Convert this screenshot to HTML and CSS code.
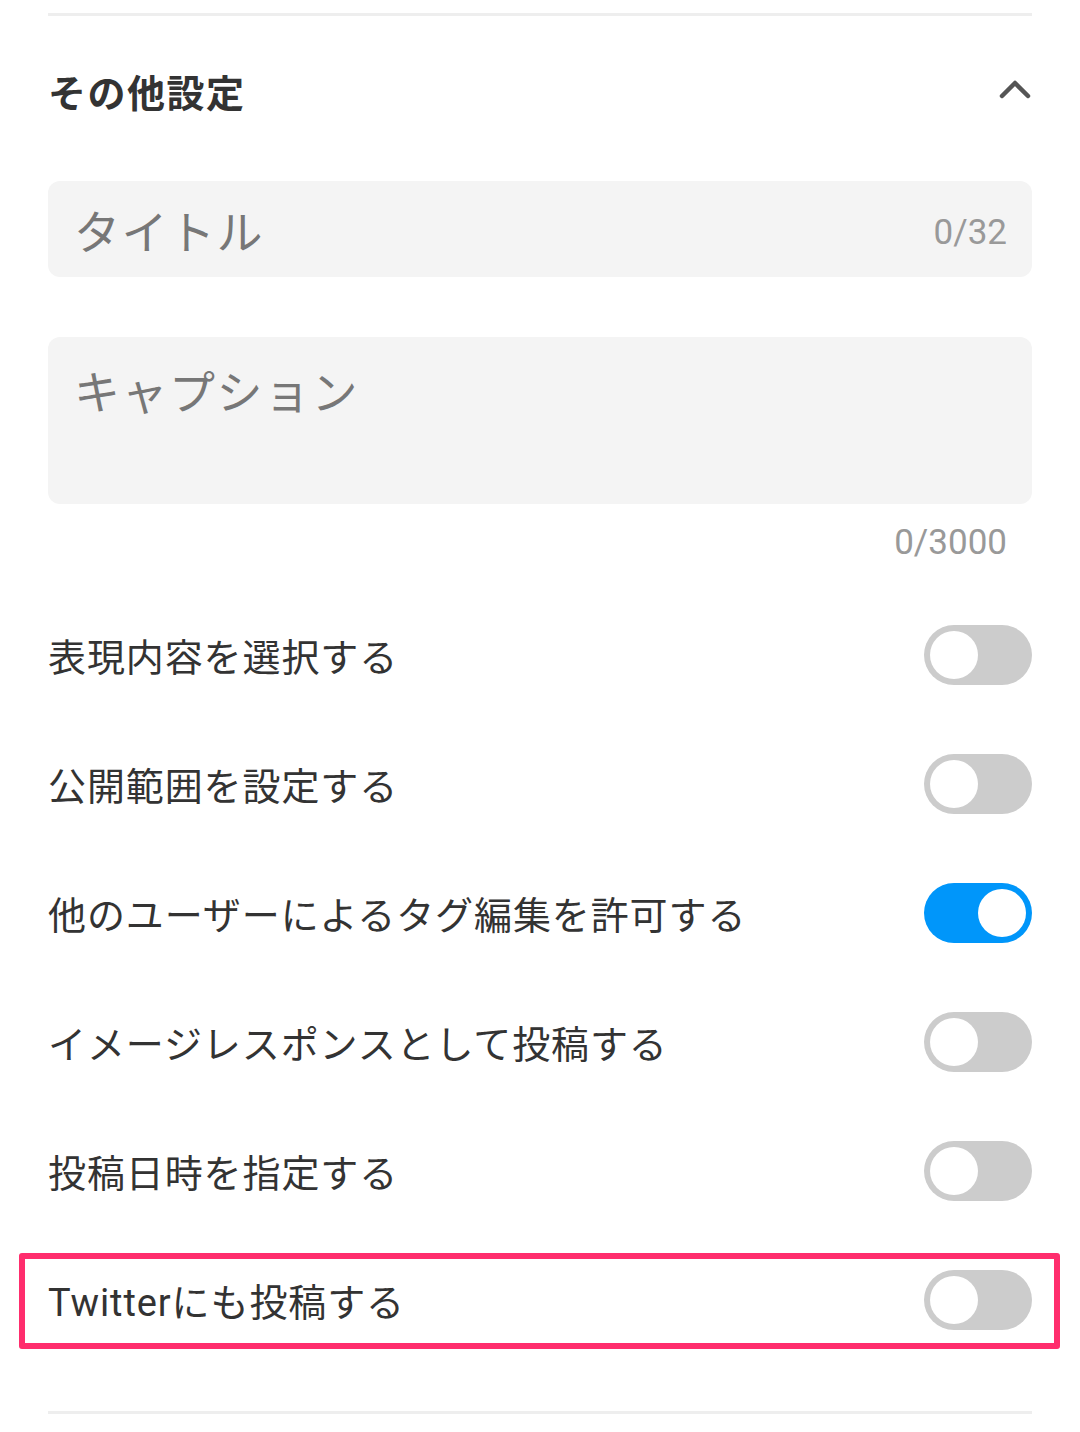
FILE: index.html
```html
<!DOCTYPE html>
<html lang="ja">
<head>
    <meta charset="UTF-8">
    <meta name="viewport" content="width=device-width, initial-scale=1.0">
    <title>その他設定</title>
    <link rel="stylesheet" href="styles.css">
</head>
<body>
    <div class="panel">
        <hr class="divider top">

        <div class="section-header">
            <h2>その他設定</h2>
            <svg class="chevron" width="32" height="22" viewBox="0 0 32 22">
                <path d="M3 18 L16 5 L29 18" fill="none" stroke="#555" stroke-width="4.5" stroke-linecap="round" stroke-linejoin="round"/>
            </svg>
        </div>

        <div class="field title-field">
            <span class="placeholder">タイトル</span>
            <span class="counter">0/32</span>
        </div>

        <div class="field caption-field">
            <span class="placeholder">キャプション</span>
        </div>
        <div class="caption-counter">0/3000</div>

        <ul class="options">
            <li class="option">
                <span>表現内容を選択する</span>
                <span class="toggle"></span>
            </li>
            <li class="option">
                <span>公開範囲を設定する</span>
                <span class="toggle"></span>
            </li>
            <li class="option">
                <span>他のユーザーによるタグ編集を許可する</span>
                <span class="toggle on"></span>
            </li>
            <li class="option">
                <span>イメージレスポンスとして投稿する</span>
                <span class="toggle"></span>
            </li>
            <li class="option">
                <span>投稿日時を指定する</span>
                <span class="toggle"></span>
            </li>
            <li class="option highlighted">
                <span>Twitterにも投稿する</span>
                <span class="toggle"></span>
            </li>
        </ul>

        <hr class="divider bottom">
    </div>
</body>
</html>
```

FILE: styles.css
```css
body {
    margin: 0;
    background-color: white;
    font-family: "Noto Sans CJK JP", "Noto Sans", sans-serif;
    color: #333;
}

.panel {
    padding: 0 48px;
}

.divider {
    border: none;
    height: 3px;
    background-color: #eeeeee;
    margin: 0;
}

.divider.top {
    margin-top: 13px;
}

.divider.bottom {
    margin-top: 47px;
}

.section-header {
    display: flex;
    align-items: center;
    justify-content: space-between;
    height: 154px;
}

.section-header h2 {
    margin: 0 0 6px 0;
    font-size: 38px;
    font-weight: bold;
    color: #333;
    letter-spacing: 1.5px;
}

.chevron {
    margin-right: 1px;
    margin-top: -8px;
}

.field {
    background-color: #f4f4f4;
    border-radius: 12px;
    box-sizing: border-box;
    padding: 0 25px 0 26px;
}

.title-field {
    margin-top: 11px;
    height: 96px;
    display: flex;
    align-items: center;
    justify-content: space-between;
}

.placeholder {
    font-size: 46px;
    color: #777;
    letter-spacing: 1.5px;
}

.counter,
.caption-counter {
    font-family: Roboto, "Noto Sans", sans-serif;
    font-size: 35px;
    color: #999;
}

.counter {
    margin-top: 6px;
}

.caption-field {
    margin-top: 60px;
    height: 167px;
    padding-top: 20px;
    line-height: 64px;
}

.caption-counter {
    text-align: right;
    padding-right: 25px;
    margin-top: 15px;
    line-height: 48px;
    margin-bottom: 23px;
}

.options {
    list-style: none;
    margin: 0;
    padding: 0;
}

.option {
    position: relative;
    display: flex;
    align-items: center;
    justify-content: space-between;
    height: 129px;
    font-family: Roboto, "Noto Sans CJK JP", sans-serif;
    font-size: 38px;
    letter-spacing: 0.9px;
    color: #333;
}

.toggle {
    position: relative;
    width: 108px;
    height: 60px;
    border-radius: 30px;
    background-color: #cccccc;
    flex-shrink: 0;
}

.toggle::after {
    content: "";
    position: absolute;
    top: 6px;
    left: 6px;
    width: 48px;
    height: 48px;
    border-radius: 50%;
    background-color: white;
}

.toggle.on {
    background-color: #0096fa;
}

.toggle.on::after {
    left: 54px;
}

/* annotation frame over the last row */
.highlighted::before {
    content: "";
    position: absolute;
    left: -29px;
    right: -28px;
    top: 18px;
    height: 96px;
    box-sizing: border-box;
    border: 6px solid #ff2d6d;
    border-radius: 3px;
}
```
